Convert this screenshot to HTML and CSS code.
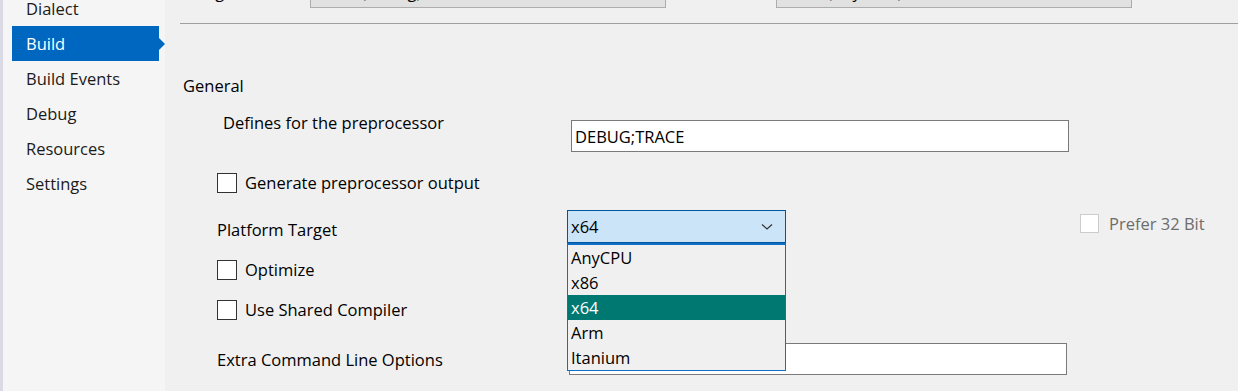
FILE: index.html
```html
<!DOCTYPE html>
<html lang="en">
  <head>
    <meta charset="UTF-8" />
    <meta name="viewport" content="width=device-width, initial-scale=1.0" />
    <title>Build</title>
    <link rel="stylesheet" href="styles.css">
  </head>

  <body>
    <div class="window">
      <ul class="nav">
        <li>Dialect</li>
        <li class="active">Build</li>
        <li>Build Events</li>
        <li>Debug</li>
        <li>Resources</li>
        <li>Settings</li>
      </ul>

      <div class="page">
        <div class="header">
          <span class="header-label">Configuration:</span>
          <div class="header-box">Active (Debug)</div>
          <span class="header-label second">Platform:</span>
          <div class="header-box">Active (Any CPU)</div>
        </div>

        <div class="section">General</div>

        <div class="row defines">
          <label class="label indent" for="defines">Defines for the preprocessor</label>
          <input class="textbox" id="defines" type="text" value="DEBUG;TRACE" />
        </div>

        <div class="row check-row gen">
          <span class="box"></span>
          <span>Generate preprocessor output</span>
        </div>

        <div class="row platform">
          <span class="label">Platform Target</span>
          <div class="combo">
            <span>x64</span>
            <svg class="chevron" width="12" height="8" viewBox="0 0 12 8">
              <path d="M1 1.5 L6 6 L11 1.5" fill="none" stroke="#333" stroke-width="1.2" />
            </svg>
            <ul class="options">
              <li>AnyCPU</li>
              <li>x86</li>
              <li class="selected">x64</li>
              <li>Arm</li>
              <li>Itanium</li>
            </ul>
          </div>
          <div class="prefer">
            <span class="box disabled"></span>
            <span>Prefer 32 Bit</span>
          </div>
        </div>

        <div class="row check-row opt">
          <span class="box"></span>
          <span>Optimize</span>
        </div>

        <div class="row check-row shared">
          <span class="box"></span>
          <span>Use Shared Compiler</span>
        </div>

        <div class="row extra">
          <span class="label">Extra Command Line Options</span>
          <input class="textbox" type="text" value="" />
        </div>
      </div>
    </div>
  </body>
</html>
```

FILE: styles.css
```css
body {
  margin: 0;
  background-color: #f0f0f0;
  font-family: "Segoe UI", "Open Sans", sans-serif;
  font-size: 16.5px;
  color: #000;
}

.window {
  display: flex;
  height: 391px;
  overflow: hidden;
}

/* left navigation */
.nav {
  list-style: none;
  margin: 0;
  padding: 0 6px 0 9px;
  width: 147px;
  flex-shrink: 0;
  background-color: #f5f5f5;
  border-left: 3px solid #dadae4;
}

.nav li {
  position: relative;
  height: 35px;
  line-height: 35px;
  padding-left: 14px;
  color: #1b1b1b;
}

.nav li:first-child {
  margin-top: -9px;
}

.nav .active {
  background-color: #0067c0;
  color: #fff;
}

.nav .active::after {
  content: "";
  position: absolute;
  right: -6px;
  top: 12px;
  border-left: 6px solid #0067c0;
  border-top: 6px solid transparent;
  border-bottom: 6px solid transparent;
}

/* right page */
.page {
  flex: 1;
  padding-left: 15px;
}

.header {
  display: flex;
  align-items: flex-start;
  height: 40px;
  margin-top: -17px;
  border-bottom: 1px solid #a0a0a0;
}

.header-label {
  width: 135px;
  margin-left: -5px;
  line-height: 18px;
}

.header-label.second {
  width: 110px;
  margin-left: 0;
}

.header-box {
  box-sizing: border-box;
  width: 356px;
  height: 25px;
  line-height: 15px;
  padding-left: 0;
  background-color: #e1e1e1;
  border: 1px solid #adadad;
}

.section {
  margin-top: 51px;
  line-height: 22px;
  padding-left: 3px;
}

.row {
  display: flex;
  align-items: flex-start;
}

.label {
  width: 350px;
  padding-left: 37px;
  line-height: 22px;
  flex-shrink: 0;
}

.label.indent {
  padding-left: 43px;
  width: 346px;
}

.textbox {
  box-sizing: border-box;
  width: 498px;
  height: 32px;
  margin: 8px 0 0 2px;
  padding: 0 3px;
  border: 1px solid #7a7a7a;
  background-color: #fff;
  font-family: inherit;
  font-size: 16.5px;
  color: #000;
  outline: none;
}

.defines {
  margin-top: 15px;
}

.check-row {
  align-items: center;
  padding-left: 37px;
  line-height: 22px;
}

.box {
  box-sizing: border-box;
  width: 20px;
  height: 20px;
  margin-right: 8px;
  background-color: #fff;
  border: 1px solid #333;
  flex-shrink: 0;
}

.box.disabled {
  width: 19px;
  height: 19px;
  border-color: #cccccc;
}

.gen {
  margin-top: 20px;
}

.platform {
  margin-top: 16px;
}

.platform .label {
  margin-top: 9px;
}

.combo {
  position: relative;
  box-sizing: border-box;
  width: 219px;
  height: 33px;
  display: flex;
  align-items: center;
  justify-content: space-between;
  padding: 0 12px 0 3px;
  background-color: #cce4f7;
  border: 1px solid #00569b;
}

.options {
  list-style: none;
  margin: 0;
  padding: 0;
  position: absolute;
  left: -1px;
  top: 32px;
  width: 219px;
  box-sizing: border-box;
  border: 1px solid #0f6fc6;
  border-top-width: 2px;
  background-color: #f0f0f0;
  z-index: 2;
}

.options li {
  height: 25px;
  line-height: 25px;
  padding-left: 3px;
}

.options .selected {
  background-color: #007872;
  color: #fff;
}

.prefer {
  display: flex;
  align-items: center;
  margin: 4px 0 0 294px;
  color: #6d6d6d;
  line-height: 19px;
}

.prefer .box {
  margin-right: 10px;
}

.opt {
  margin-top: 16px;
}

.shared {
  margin-top: 18px;
}

.extra {
  margin-top: 14px;
}

.extra .label {
  margin-top: 14px;
}
```
